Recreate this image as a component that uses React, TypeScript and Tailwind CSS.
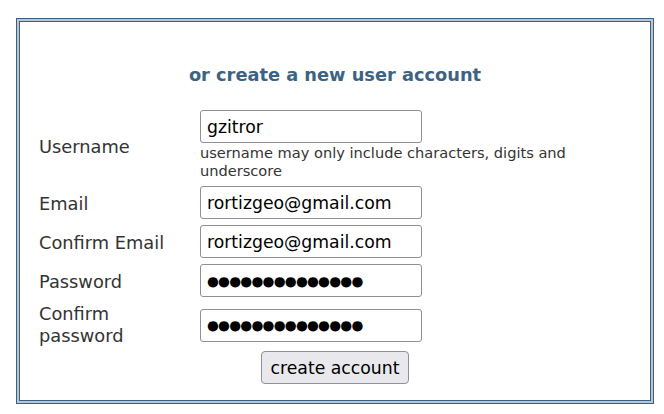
import React from "react";

const font = { fontFamily: '"DejaVu Sans", Verdana, sans-serif' };

function Field({ value, dots }: { value: string; dots?: boolean }) {
  return (
    <input
      readOnly
      value={value}
      className={
        "h-[33px] w-[222px] rounded-[3px] border border-[#8f8f9d] bg-white px-[6px] text-black outline-none " +
        (dots ? "text-[13.6px] tracking-[-0.75px]" : "text-[17.25px]")
      }
      style={font}
    />
  );
}

export default function App() {
  const dots = "●●●●●●●●●●●●●●";
  return (
    <div className="min-h-[414px] bg-white pt-[18px]" style={font}>
      <div className="ml-4 w-[638px] border border-[#3e5f7f] bg-[#b8c6d4] p-[2px]">
        <div className="h-[380px] border border-[#3e5f7f] bg-white">
          <h2 className="mt-[42px] text-center text-[17.8px] font-bold leading-[22px] text-[#3d6384]">
            or create a new user account
          </h2>

          <div className="mt-[24px] flex flex-col gap-[6px] pl-[19px] text-[17.8px] text-[#333]">
            <div className="flex items-center">
              <div className="w-[161px] pt-[4px]">Username</div>
              <div className="flex flex-col">
                <Field value="gzitror" />
                <div className="mt-[1px] w-[380px] text-[14.6px] leading-[18px]">
                  username may only include characters, digits and underscore
                </div>
              </div>
            </div>
            <div className="flex items-center">
              <div className="w-[161px] pt-[4px]">Email</div>
              <Field value="rortizgeo@gmail.com" />
            </div>
            <div className="flex items-center">
              <div className="w-[161px] pt-[4px]">Confirm Email</div>
              <Field value="rortizgeo@gmail.com" />
            </div>
            <div className="flex items-center">
              <div className="w-[161px] pt-[4px]">Password</div>
              <Field value={dots} dots />
            </div>
            <div className="flex items-center">
              <div className="w-[161px] leading-[22px]">
                Confirm
                <br />
                password
              </div>
              <Field value={dots} dots />
            </div>
          </div>

          <div className="mt-[4px] flex justify-center">
            <button
              type="button"
              className="h-[33px] w-[148px] rounded-[4px] border border-[#8f8f9d] bg-[#e9e9ed] pt-[3px] text-[17.25px] text-black"
              style={font}
            >
              create account
            </button>
          </div>
        </div>
      </div>
    </div>
  );
}
